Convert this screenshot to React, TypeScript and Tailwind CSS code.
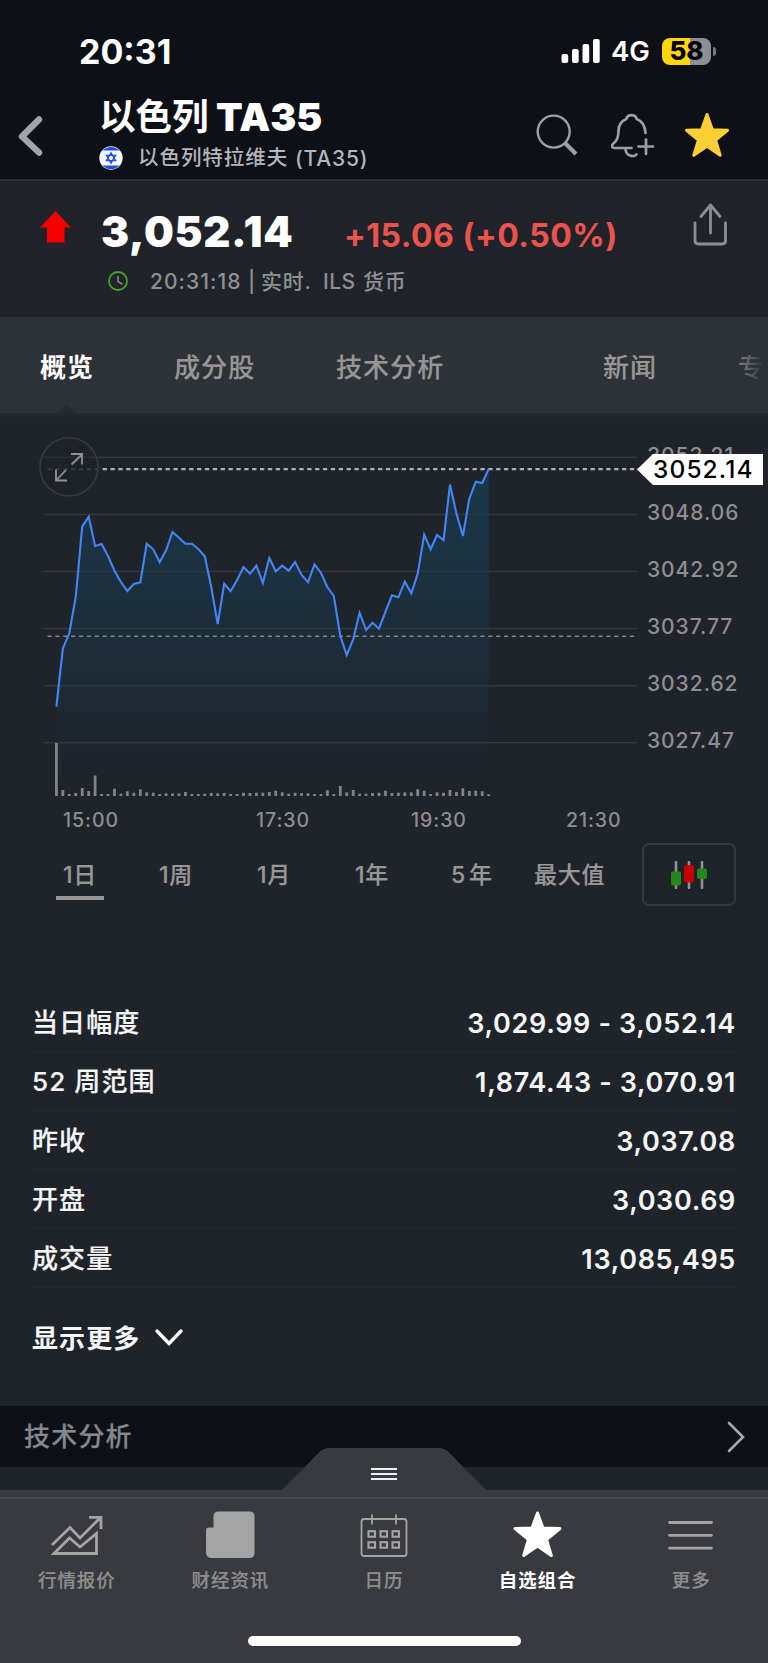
const prices = [
  706.7, 648.3, 633.3, 596.7, 526.7, 516.7, 546, 544, 556, 570.7, 582, 591, 584, 582.3, 543.7, 549.3, 562.3, 550.3, 532, 537.7,
  543.7, 543.7, 549, 556.3, 586.7, 624, 583.7, 591.3, 580, 567, 573.7, 565.7, 583, 558, 571.3, 565.7, 570.7, 562, 575, 582.3,
  564.3, 572.7, 587.3, 596, 636, 655, 639.3, 612.7, 630, 622.7, 628.7, 611.7, 595.3, 597.3, 581.7, 593.3, 573.7, 534.7, 549.3,
  535, 540.3, 484.5, 513.3, 536, 498.7, 481.7, 483, 469,
];

const volumes = [
  53, 6, 2, 3, 8, 5, 20.5, 2, 2, 7.3, 2.3, 4.7, 3.3, 6.7, 3.7, 3.3, 2, 2.7, 2.5, 2.5, 4, 2, 2, 2.3, 3, 2.7, 3, 2, 2, 3.3, 3,
  3.3, 3.3, 4, 5.3, 3.7, 2.3, 3.3, 3, 2.7, 2, 2, 5.7, 2, 10, 3.7, 6, 2.3, 2.3, 3, 3.3, 5.3, 3, 3.3, 3.7, 3.7, 6.7, 5.3, 2,
  3.7, 3.3, 6, 4, 7.7, 5, 5.3, 4.7, 1.7,
];

const gridLines = [457.3, 514.4, 571.5, 628.6, 685.7, 742.8];
const axisLabels = ["3053.21", "3048.06", "3042.92", "3037.77", "3032.62", "3027.47"];

const stats = [
  { label: "当日幅度", value: "3,029.99 - 3,052.14" },
  { label: "52 周范围", value: "1,874.43 - 3,070.91" },
  { label: "昨收", value: "3,037.08" },
  { label: "开盘", value: "3,030.69" },
  { label: "成交量", value: "13,085,495" },
];

const pointX = (i: number) => 56.4 + i * 6.452;

const StatusBar = () => (
  <div className="flex h-[102px] items-center pl-[79px] text-white">
    <span className="w-[482px] pt-[2px] text-[34px] font-bold leading-none">20:31</span>
    <svg width="40" height="26" viewBox="0 0 40 26" fill="#fff">
      <rect x="0.5" y="16" width="6.7" height="9" rx="2" />
      <rect x="11" y="11" width="6.7" height="14" rx="2" />
      <rect x="21.5" y="6" width="6.7" height="19" rx="2" />
      <rect x="32" y="1" width="6.7" height="24" rx="2" />
    </svg>
    <span className="ml-[10px] w-[51px] pt-[2px] text-[27.5px] font-semibold leading-none">4G</span>
    <div className="flex h-[27px] w-[49px] items-center justify-center rounded-[8px] bg-[linear-gradient(90deg,#ffd60a_57%,#8e8e93_57%)] text-[26px] font-extrabold leading-none text-black">
      58
    </div>
    <div className="ml-[2px] h-[9px] w-[3px] rounded-r-full bg-[#77777c]" />
  </div>
);

const Header = () => (
  <header className="h-[179px] bg-[#0d1017]">
    <StatusBar />
    <div className="flex h-[77px]">
      <svg className="ml-[16px] mt-[12px] shrink-0" width="30" height="46" viewBox="0 0 30 46" fill="none">
        <path d="M23 5.5 6 22.5l17 16" stroke="#a0a4ac" strokeWidth="6.5" strokeLinecap="round" strokeLinejoin="round" />
      </svg>
      <div className="-mt-[8px] ml-[53px] w-[437px]">
        <h1 className="flex h-[44px] items-center whitespace-nowrap leading-none text-white">
          <span className="w-[117px] pt-[2px] text-[36.5px] font-bold">以色列</span>
          <span className="text-[39px] font-black">TA35</span>
        </h1>
        <div className="flex h-[40px] items-center whitespace-nowrap text-[21px] font-medium leading-none text-[#b3b6bb]">
          <svg className="mr-[15px]" width="24" height="24" viewBox="0 0 24 24" fill="none">
            <circle cx="12" cy="12" r="11.7" fill="#f4f6fb" />
            <path d="M3.5 4.6A11.7 11.7 0 0 1 20.5 4.6ZM3.5 19.4A11.7 11.7 0 0 0 20.5 19.4Z" fill="#2350d8" />
            <path d="M12 6.8 16.5 14.6H7.5ZM12 17.2 7.5 9.4H16.5Z" stroke="#2350d8" strokeWidth="1.4" />
          </svg>
          <span className="w-[157px] text-[20.5px] tracking-[0.95px]">以色列特拉维夫</span>
          <span className="tracking-[0.8px]">(TA35)</span>
        </div>
      </div>
      <svg className="mt-[11px] shrink-0" width="44" height="44" viewBox="0 0 44 44" fill="none" stroke="#9a9fa8">
        <circle cx="17.7" cy="18.6" r="16" strokeWidth="2.4" />
        <path d="M29 30 40 41" strokeWidth="4" />
      </svg>
      <svg className="ml-[31px] mt-[11px] shrink-0" width="44" height="48" viewBox="0 0 44 48" fill="none" stroke="#9a9fa8" strokeWidth="2.7" strokeLinecap="round" strokeLinejoin="round">
        <path d="M20.5 35H3.5C0 35 0.5 32 2.5 30.5C7 27 7.5 23 7.5 18C7.5 12 10.5 8 15.3 6C16.5 0.7 24.5 0.7 25.7 6C31 8 34 12.5 34.5 20" />
        <path d="M14.5 36C15 43 22 44.5 25.5 41.5M35 26.5V41M27.5 33.5H42" />
      </svg>
      <svg className="ml-[28px] mt-[8px] shrink-0" width="48" height="50" viewBox="0 0 48 50">
        <path d="M24 4.5 29.4 19.8 44.5 20.3 32.6 30.1 37.2 45.3 24 36.3 10.8 45.3 15.4 30.1 3.5 20.3 18.6 19.8Z" fill="#fdcf37" stroke="#fdcf37" strokeWidth="3" strokeLinejoin="round" />
      </svg>
    </div>
  </header>
);

const Quote = () => (
  <section className="flex h-[138px] border-t-2 border-[#2b2f34] bg-[#20242a]">
    <svg className="ml-[39px] mt-[30px] shrink-0" width="33" height="33" viewBox="0 0 33 33">
      <path d="M16.5 0 32 16.5H25.5V31.5H8V16.5H1Z" fill="#f40000" />
    </svg>
    <div className="ml-[29px] mt-[24px] w-[590px]">
      <div className="flex items-baseline whitespace-nowrap leading-[54px]">
        <span className="w-[243px] text-[42px] font-black tracking-[0.7px] text-white">3,052.14</span>
        <span className="text-[32px] font-bold tracking-[0.5px] text-[#ec534c]">+15.06 (+0.50%)</span>
      </div>
      <div className="-mt-[4px] flex h-[44px] items-center whitespace-nowrap text-[21px] font-medium leading-none text-[#8f9093]">
        <svg className="ml-[6px] mr-[21px]" width="22" height="22" viewBox="0 0 22 22" fill="none" strokeWidth="1.8">
          <circle cx="11" cy="11" r="9" stroke="#45a12c" />
          <path d="M11 6v5.5l4.5 2.8" stroke="#8a8a8a" strokeWidth="1.5" />
        </svg>
        <span className="w-[111px] tracking-[1.05px]">20:31:18 |</span>
        <span className="w-[62px] tracking-[0.7px]">实时.</span>
        <span className="w-[40px] tracking-[0.5px]">ILS</span>
        <span className="tracking-[0.7px]">货币</span>
      </div>
    </div>
    <svg className="mt-[21px] shrink-0" width="38" height="46" viewBox="0 0 38 46" fill="none" stroke="#8b8e96" strokeWidth="2.8" strokeLinecap="round" strokeLinejoin="round">
      <path d="M4 21V38.5Q4 42 7.5 42H31Q34.5 42 34.5 38.5V21M19.5 31V3M10 14.5 19.5 3 29 14.5" />
    </svg>
  </section>
);

const Tabs = () => (
  <nav className="relative flex h-[96px] items-center overflow-hidden whitespace-nowrap bg-[#2d3138] pl-[40px] pt-[6px] text-[26px] leading-none tracking-[1.1px] text-[#979694]">
    <span className="w-[134px] font-bold text-white">概览</span>
    <span className="w-[162px] font-medium [-webkit-text-stroke:0.2px_#979694]">成分股</span>
    <span className="w-[267px] font-medium [-webkit-text-stroke:0.2px_#979694]">技术分析</span>
    <span className="w-[135px] font-medium [-webkit-text-stroke:0.2px_#979694]">新闻</span>
    <span className="bg-gradient-to-r from-[#828486] to-[#2d3138] bg-clip-text font-medium text-transparent">专</span>
    <svg className="absolute bottom-0 left-[57px]" width="20" height="9" viewBox="0 0 20 9">
      <path d="M1 9 10 0 19 9Z" fill="#282c32" />
    </svg>
  </nav>
);

const Chart = () => {
  const line = prices.map((y, i) => `${pointX(i).toFixed(1)},${y}`).join(" ");
  return (
    <section className="relative h-[422px] bg-[linear-gradient(#24282e,#1f242b_18px)]">
      <svg className="absolute left-0 top-0" width="768" height="422" viewBox="0 413 768 422" fill="none">
        <defs>
          <linearGradient id="area" x1="0" y1="470" x2="0" y2="775" gradientUnits="userSpaceOnUse">
            <stop offset="0" stopColor="#183e56" stopOpacity="0.75" />
            <stop offset="1" stopColor="#183e56" stopOpacity="0" />
          </linearGradient>
        </defs>
        {gridLines.map((y) => (
          <path key={y} d={`M43.5 ${y}H637`} stroke="#34373b" strokeWidth="1.5" />
        ))}
        <polygon points={`56.4,795 ${line} 488.7,795`} fill="url(#area)" />
        <path d="M47.5 636.2H635" stroke="#85888b" strokeWidth="1.6" strokeDasharray="4.2 3.67" />
        <path d="M102.6 469.2H638" stroke="#aeb0b3" strokeWidth="2.2" strokeDasharray="4.3 3.57" />
        <path d="M47.5 469.2H97" stroke="#4b4e53" strokeWidth="2" strokeDasharray="4.3 3.57" />
        <polyline points={line} stroke="#4385f5" strokeWidth="2.1" strokeLinejoin="miter" />
        {volumes.map((v, i) => (
          <rect key={i} x={pointX(i) - 1.4} y={796 - v} width="2.8" height={v} fill="#818386" />
        ))}
        <circle cx="69" cy="466.9" r="29" fill="#1f242b" fillOpacity="0.4" stroke="#36393e" strokeWidth="1.8" />
        <path d="M71.5 464.5 82 454.5M71 454H82V464.5M66 470 56 480.5M56 469.5V480.5H67" stroke="#929290" strokeWidth="1.8" />
      </svg>
      <div className="relative ml-[647px] pt-[14px] text-[21px] font-medium tracking-[0.95px] text-[#8e8e90]">
        {axisLabels.map((label) => (
          <div key={label} className="h-[57.1px] leading-[57px]">{label}</div>
        ))}
      </div>
      <div className="relative flex pl-[63px] pt-[31px] text-[19.5px] font-medium leading-[38px] tracking-[0.95px] text-[#8e8e90]">
        <span className="w-[193px]">15:00</span>
        <span className="w-[155px]">17:30</span>
        <span className="w-[155px]">19:30</span>
        <span>21:30</span>
      </div>
      <div className="absolute left-[637px] top-[41px] flex h-[31px] w-[126px] items-center bg-white pl-[16px] text-[24.5px] font-medium leading-none tracking-[1.1px] text-black [clip-path:polygon(0_50%,16px_0,100%_0,100%_100%,16px_100%)]">
        3052.14
      </div>
    </section>
  );
};

const Ranges = () => (
  <div className="flex h-[80px] items-center whitespace-nowrap pl-[56px] text-[23px] font-medium leading-none tracking-[0.8px] text-[#989797] [-webkit-text-stroke:0.2px_#989797]">
    <div className="mr-[55px] flex h-[50px] w-[48px] items-center justify-center border-b-[4px] border-[#989797] pt-[4px]">1日</div>
    <span className="w-[98px]">1周</span>
    <span className="w-[98px]">1月</span>
    <span className="w-[96px]">1年</span>
    <span className="w-[83px]">5<span className="ml-[3px]">年</span></span>
    <span className="w-[108px]">最大值</span>
    <div className="-mt-[1px] flex h-[63px] w-[94px] items-center justify-center rounded-[7px] border-2 border-[#36393d]">
      <svg width="38" height="28" viewBox="0 0 38 28">
        <path d="M6 1V27M19 1V27M32 1V27" stroke="#929292" strokeWidth="2.6" strokeLinecap="round" />
        <rect x="1" y="10.5" width="10" height="14" rx="2" fill="#23871c" />
        <rect x="14" y="4" width="10" height="17.5" rx="2" fill="#c60000" />
        <rect x="27" y="7.5" width="10" height="10.5" rx="2" fill="#23871c" />
      </svg>
    </div>
  </div>
);

const Stats = () => (
  <section className="px-[32px] pt-[78px]">
    {stats.map((s) => (
      <div key={s.label} className="flex h-[59.1px] items-center justify-between border-b border-[#25292d] pt-[2px] leading-none text-[#f4f5f5]">
        <span className="text-[26px] font-medium tracking-[1.1px] [-webkit-text-stroke:0.2px_#f4f5f5]">{s.label}</span>
        <span className="text-[27px] font-semibold tracking-[0.65px]">{s.value}</span>
      </div>
    ))}
    <div className="flex h-[98px] items-center pt-[3px] text-[26px] font-bold leading-none tracking-[1.1px] text-[#f4f5f5]">
      显示更多
      <svg className="-mt-[2px] ml-[14px]" width="30" height="20" viewBox="0 0 30 20" fill="none">
        <path d="M3 3 15 15.5 27 3" stroke="#fff" strokeWidth="3.3" strokeLinecap="round" />
      </svg>
    </div>
  </section>
);

const SectionBar = () => (
  <section className="mt-[20px] flex h-[61px] items-center justify-between bg-[#0d1017] pl-[24px] pr-[22px] text-[26px] font-medium leading-none tracking-[1.2px] text-[#84878b]">
    <span className="[-webkit-text-stroke:0.2px_#84878b]">技术分析</span>
    <svg width="20" height="34" viewBox="0 0 20 34" fill="none">
      <path d="M3 3 17 17 3 31" stroke="#a9a9a9" strokeWidth="2.6" strokeLinecap="round" />
    </svg>
  </section>
);

const MarketsIcon = () => (
  <svg width="56" height="50" viewBox="0 0 56 50" fill="none" stroke="#a4a4a4" strokeWidth="2.8">
    <path d="M3 34 21 16.5 31 27 51 7M40 6.3H52V18M5 42.5 20.5 27 31 36 47.5 22.5V42.5Z" />
  </svg>
);

const NewsIcon = () => (
  <svg width="50" height="50" viewBox="0 0 50 50" fill="#a4a4a4">
    <path d="M8.5 16.500V5.500Q8.5 0.500 13.5 0.500H44.5Q49.5 0.500 49.5 5.500V42Q49.5 47 44.5 47H7Q1 47 1 41V19.500Q1 16.500 4 16.500Z" />
  </svg>
);

const CalendarIcon = () => (
  <svg width="48" height="50" viewBox="0 0 48 50" fill="none" stroke="#a4a4a4">
    <rect x="1.5" y="8" width="45" height="37" rx="2.5" strokeWidth="1.8" />
    <path d="M12 3.5V13.5M36 3.5V13.5" strokeWidth="1.8" />
    {[8.5, 20.5, 32.5].map((x) => (
      <g key={x} strokeWidth="2.1">
        <rect x={x} y="20.2" width="6.5" height="5.5" />
        <rect x={x} y="31.2" width="6.5" height="5.5" />
      </g>
    ))}
  </svg>
);

const StarIcon = () => (
  <svg width="52" height="50" viewBox="0 0 52 50">
    <path d="M25.5 2 31 17 48 17.5 34.500 28.5 39.3 44.5 25.5 35 11.7 44.5 16.5 28.5 3 17.5 20 17Z" fill="#fff" stroke="#fff" strokeWidth="3" strokeLinejoin="round" />
  </svg>
);

const MoreIcon = () => (
  <svg width="46" height="50" viewBox="0 0 46 50" stroke="#a4a4a4" strokeWidth="2.8" strokeLinecap="round">
    <path d="M1.5 11.5H43.5M1.5 24.3H43.5M1.5 37.2H43.5" />
  </svg>
);

const navItems = [
  { label: "行情报价", Icon: MarketsIcon },
  { label: "财经资讯", Icon: NewsIcon },
  { label: "日历", Icon: CalendarIcon },
  { label: "自选组合", Icon: StarIcon, active: true },
  { label: "更多", Icon: MoreIcon },
];

const BottomNav = () => (
  <footer className="relative mt-[23px] h-[173px] bg-[#383a3f]">
    <svg className="absolute left-[281px] top-[-42px]" width="206" height="43" viewBox="0 0 206 43">
      <path d="M0.5 42.5 38 4.5Q42.5 0 48 0H158Q163.5 0 168 4.5L205.5 42.5Z" fill="#373b3f" />
      <path d="M90 21H116M90 26H116M90 31H116" stroke="#edf3f2" strokeWidth="2" />
    </svg>
    <div className="h-[9px] border-b-2 border-[#43464b] bg-[#373b3e]" />
    <div className="grid grid-cols-5">
      {navItems.map(({ label, Icon, active }) => (
        <div key={label} className="flex flex-col items-center pt-[12px]">
          <Icon />
          <span className={`mt-[9px] text-[18.5px] leading-[20px] tracking-[0.9px] ${active ? "font-bold text-white" : "font-medium text-[#8d8d8d] [-webkit-text-stroke:0.2px_#8d8d8d]"}`}>{label}</span>
        </div>
      ))}
    </div>
    <div className="mx-auto mt-[46px] h-[10px] w-[273px] rounded-full bg-white" />
  </footer>
);

export default function App() {
  return (
    <main lang="zh-CN" className="h-[1663px] w-[768px] overflow-hidden bg-[#1f242b] font-[Inter,'Noto_Sans_CJK_SC',sans-serif]">
      <Header />
      <Quote />
      <Tabs />
      <Chart />
      <Ranges />
      <Stats />
      <SectionBar />
      <BottomNav />
    </main>
  );
}
